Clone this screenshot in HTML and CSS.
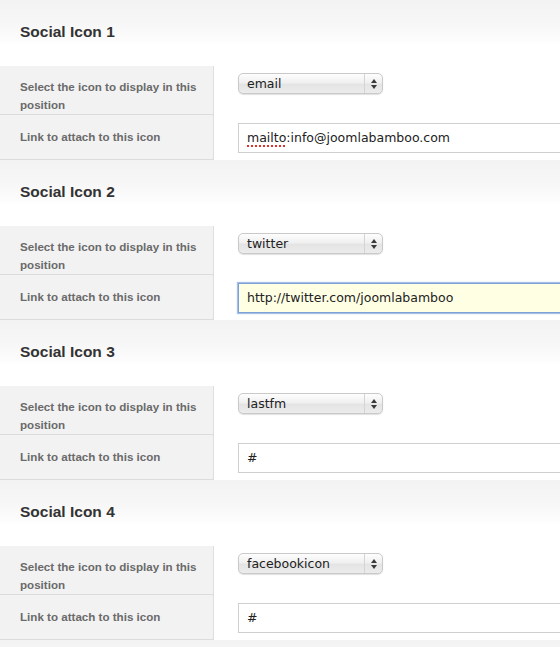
FILE: index.html
```html
<!DOCTYPE html>
<html>
<head>
<meta charset="utf-8">
<link rel="stylesheet" href="styles.css">
</head>
<body>
<div class="page">
  <section class="group">
    <h3 class="group-title">Social Icon 1</h3>
    <div class="row row-select">
      <div class="label">Select the icon to display in this position</div>
      <div class="field">
        <div class="select"><span class="select-value">email</span><span class="select-arrows"><i class="up"></i><i class="down"></i></span></div>
      </div>
    </div>
    <div class="row row-link">
      <div class="label">Link to attach to this icon</div>
      <div class="field">
        <div class="input"><span class="misspelled">mailto</span>:info@joomlabamboo.com</div>
      </div>
    </div>
  </section>

  <section class="group">
    <h3 class="group-title">Social Icon 2</h3>
    <div class="row row-select">
      <div class="label">Select the icon to display in this position</div>
      <div class="field">
        <div class="select"><span class="select-value">twitter</span><span class="select-arrows"><i class="up"></i><i class="down"></i></span></div>
      </div>
    </div>
    <div class="row row-link">
      <div class="label">Link to attach to this icon</div>
      <div class="field">
        <div class="input input-focus">http://twitter.com/joomlabamboo</div>
      </div>
    </div>
  </section>

  <section class="group">
    <h3 class="group-title">Social Icon 3</h3>
    <div class="row row-select">
      <div class="label">Select the icon to display in this position</div>
      <div class="field">
        <div class="select"><span class="select-value">lastfm</span><span class="select-arrows"><i class="up"></i><i class="down"></i></span></div>
      </div>
    </div>
    <div class="row row-link">
      <div class="label">Link to attach to this icon</div>
      <div class="field">
        <div class="input">#</div>
      </div>
    </div>
  </section>

  <section class="group">
    <h3 class="group-title">Social Icon 4</h3>
    <div class="row row-select">
      <div class="label">Select the icon to display in this position</div>
      <div class="field">
        <div class="select"><span class="select-value">facebookicon</span><span class="select-arrows"><i class="up"></i><i class="down"></i></span></div>
      </div>
    </div>
    <div class="row row-link">
      <div class="label">Link to attach to this icon</div>
      <div class="field">
        <div class="input">#</div>
      </div>
    </div>
  </section>

  <div class="group-tail"></div>
</div>
</body>
</html>
```

FILE: styles.css
```css
html, body {
  margin: 0;
  padding: 0;
  background: #fff;
  overflow: hidden;
}

.page {
  width: 560px;
  font-family: "Liberation Sans", Arial, sans-serif;
}

.group {
  display: flex;
  flex-direction: column;
}

.group-title {
  margin: 0;
  height: 66px;
  box-sizing: border-box;
  padding: 22px 0 0 20px;
  line-height: 20px;
  font-size: 15.5px;
  font-weight: bold;
  color: #333;
  background: linear-gradient(to bottom, #f3f3f3 0px, #f7f7f7 25px, #fdfdfd 42px, #fff 46px);
}

.group-tail {
  height: 20px;
  background: linear-gradient(to bottom, #f3f3f3 0px, #f7f7f7 25px);
}

.row {
  display: grid;
  grid-template-columns: 214px 1fr;
}

.row-select {
  height: 49px;
}

.row-link {
  height: 45px;
}

.label {
  box-sizing: border-box;
  background: #f2f2f2;
  border-right: 1px solid #dedede;
  border-bottom: 1px solid #dcdcdc;
  padding-left: 20px;
  padding-right: 12px;
  font-size: 11.6px;
  font-weight: bold;
  color: #6a6a6a;
  line-height: 18px;
}

.row-select .label {
  padding-top: 12px;
}

.row-link .label {
  display: flex;
  align-items: center;
  padding-bottom: 1px;
}

.field {
  overflow: hidden;
  padding-left: 24px;
}

.row-select .field {
  padding-top: 7px;
}

.row-link .field {
  padding-top: 8px;
}

.select {
  width: 145px;
  height: 21px;
  box-sizing: border-box;
  display: flex;
  align-items: center;
  border-radius: 5px;
  border: 1px solid #c9c9c9;
  background: linear-gradient(to bottom, #fdfdfd 0%, #f0f0f0 45%, #e4e4e4 55%, #ececec 100%);
  box-shadow: 0 1px 1px rgba(0,0,0,0.12);
  font-family: "DejaVu Sans", sans-serif;
  font-size: 12.5px;
  color: #222;
}

.select-value {
  flex: 1;
  padding-left: 8px;
  line-height: 19px;
}

.select-arrows {
  width: 17px;
  height: 19px;
  border-left: 1px solid #d4d4d4;
  display: flex;
  flex-direction: column;
  align-items: center;
  justify-content: center;
  gap: 2px;
}

.select-arrows i {
  display: block;
  width: 0;
  height: 0;
  border-left: 3px solid transparent;
  border-right: 3px solid transparent;
}

.select-arrows .up {
  border-bottom: 4px solid #3a3a3a;
}

.select-arrows .down {
  border-top: 4px solid #3a3a3a;
}

.input {
  width: 340px;
  height: 30px;
  box-sizing: border-box;
  border: 1px solid #cfcfcf;
  background: #fff;
  padding-left: 8px;
  line-height: 28px;
  font-family: "DejaVu Sans", sans-serif;
  font-size: 12.5px;
  color: #222;
  white-space: nowrap;
}

.input-focus {
  border: 1px solid #7c9fd6;
  background: #ffffe4;
  box-shadow: 0 0 1px 1px #a7c0e8;
}

.misspelled {
  text-decoration: underline dotted #e0302a;
  text-decoration-thickness: 2px;
  text-underline-offset: 3px;
}
```
